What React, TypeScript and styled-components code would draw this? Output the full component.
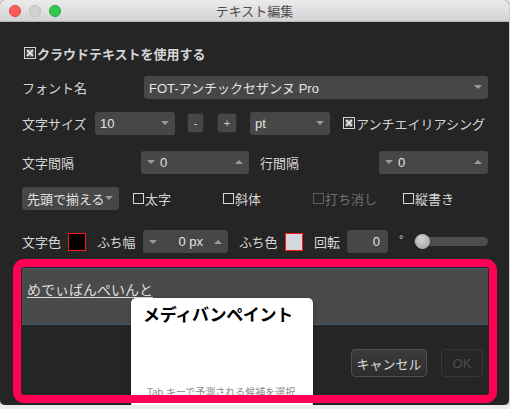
import React from 'react';
import styled, { createGlobalStyle } from 'styled-components';

const GlobalStyle = createGlobalStyle`
  html, body {
    margin: 0;
    padding: 0;
    background: #ececec;
  }
  body {
    font-family: "Liberation Sans", "Noto Sans CJK JP", sans-serif;
  }
`;

const Window = styled.div`
  position: relative;
  width: 509px;
  height: 405px;
  background: #252525;
  border-radius: 5px;
  box-shadow: 0 1px 3px rgba(0, 0, 0, 0.35);
`;

const TitleBar = styled.div`
  position: relative;
  height: 22px;
  box-sizing: border-box;
  display: flex;
  align-items: center;
  justify-content: center;
  background: linear-gradient(#ecebec, #d4d2d4);
  border-bottom: 1px solid #b4b4b4;
  border-radius: 5px 5px 0 0;
`;

const Lights = styled.div`
  position: absolute;
  left: 9px;
  top: 5px;
  display: flex;
  gap: 8px;
`;

const Light = styled.span<{ $c: string; $b: string }>`
  width: 12px;
  height: 12px;
  box-sizing: border-box;
  border-radius: 50%;
  background: ${(p) => p.$c};
  border: 1px solid ${(p) => p.$b};
`;

const Title = styled.div`
  font-size: 13px;
  color: #4b4b4b;
`;

const Body = styled.div`
  padding: 14px 21px 0 22px;
  display: flex;
  flex-direction: column;
  color: #d6d6d6;
  font-size: 13px;
`;

const Row = styled.div<{ $h: number }>`
  height: ${(p) => p.$h}px;
  display: flex;
  align-items: center;
`;

const Label = styled.div<{ $w: number; $ml?: number }>`
  width: ${(p) => p.$w}px;
  margin-left: ${(p) => p.$ml || 0}px;
  flex-shrink: 0;
  white-space: nowrap;
`;

const CloudLabel = styled.div`
  display: flex;
  align-items: center;
  gap: 1px;
  font-weight: bold;
  margin-left: 2px;
`;

const Select = styled.div<{ $w?: number; $ml?: number; $h?: number }>`
  ${(p) => (p.$w ? `width: ${p.$w}px;` : 'flex: 1;')}
  height: ${(p) => p.$h || 23}px;
  margin-left: ${(p) => p.$ml || 0}px;
  box-sizing: border-box;
  padding: 0 6px 0 5px;
  display: flex;
  align-items: center;
  justify-content: space-between;
  background: #474747;
  border-radius: 3px;
  color: #e4e4e4;
  font-size: 13px;
  white-space: nowrap;
`;

const Arrow = styled.span<{ $up?: boolean }>`
  width: 0;
  height: 0;
  border-left: 4px solid transparent;
  border-right: 4px solid transparent;
  ${(p) => (p.$up ? 'border-bottom: 4px solid #9a9a9a;' : 'border-top: 4px solid #9a9a9a;')}
  flex-shrink: 0;
`;

const Spinner = styled.div<{ $w: number }>`
  width: ${(p) => p.$w}px;
  height: 23px;
  box-sizing: border-box;
  padding: 0 6px;
  display: flex;
  align-items: center;
  gap: 5px;
  background: #474747;
  border-radius: 3px;
  color: #e4e4e4;
`;

const SpinValue = styled.span<{ $right?: boolean }>`
  flex: 1;
  text-align: ${(p) => (p.$right ? 'right' : 'left')};
  padding-right: ${(p) => (p.$right ? 6 : 0)}px;
`;

const SmallButton = styled.div<{ $w: number; $ml: number }>`
  width: ${(p) => p.$w}px;
  height: 20px;
  margin-left: ${(p) => p.$ml}px;
  box-sizing: border-box;
  display: flex;
  align-items: center;
  justify-content: center;
  background: #474747;
  border: 1px solid #2f2f2f;
  border-radius: 3px;
  font-size: 11px;
  color: #cfcfcf;
`;

const Check = styled.div<{ $w?: number; $ml?: number; $off?: boolean }>`
  ${(p) => (p.$w ? `width: ${p.$w}px;` : '')}
  margin-left: ${(p) => p.$ml || 0}px;
  display: flex;
  align-items: center;
  gap: 1px;
  color: ${(p) => (p.$off ? '#6e6e6e' : '#d6d6d6')};
  white-space: nowrap;
`;

const Box = styled.span<{ $off?: boolean }>`
  width: 11px;
  height: 11px;
  box-sizing: border-box;
  border: 1px solid ${(p) => (p.$off ? '#5e5e5e' : '#d6d6d6')};
  flex-shrink: 0;
  display: flex;
`;

const Swatch = styled.div<{ $c: string }>`
  width: 18px;
  height: 18px;
  box-sizing: border-box;
  border: 1px solid #ff1a1a;
  background: ${(p) => p.$c};
  flex-shrink: 0;
`;

const NumInput = styled.div`
  width: 41px;
  height: 23px;
  box-sizing: border-box;
  padding-right: 8px;
  display: flex;
  align-items: center;
  justify-content: flex-end;
  background: #474747;
  border-radius: 3px;
  color: #e4e4e4;
`;

const Degree = styled.div`
  width: 15px;
  margin-left: 11px;
  font-size: 11px;
  margin-top: -6px;
`;

const Slider = styled.div`
  position: relative;
  width: 74px;
  height: 9px;
  background: #4d4d4d;
  border-radius: 5px;
`;

const Knob = styled.span`
  position: absolute;
  left: 1px;
  top: -3px;
  width: 15px;
  height: 15px;
  border-radius: 50%;
  background: radial-gradient(circle at 40% 35%, #d2d2d2, #9c9c9c);
`;

const TextArea = styled.div`
  height: 57px;
  margin-top: -1px;
  box-sizing: border-box;
  padding: 10px 5px;
  background: #4a4a4a;
  border-top: 1px solid #3c5b73;
  border-bottom: 1px solid #3c5b73;
  font-size: 14px;
  color: #dedede;
`;

const Composing = styled.span`
  text-decoration: underline;
  text-underline-offset: 2px;
`;

const Buttons = styled.div`
  margin-top: 24px;
  margin-right: 5px;
  display: flex;
  justify-content: flex-end;
  gap: 14px;
`;

const Button = styled.div<{ $w: number; $off?: boolean }>`
  width: ${(p) => p.$w}px;
  height: 28px;
  box-sizing: border-box;
  display: flex;
  align-items: center;
  justify-content: center;
  border-radius: 4px;
  font-size: 13px;
  border: 1px solid ${(p) => (p.$off ? '#383838' : '#505050')};
  background: ${(p) => (p.$off ? '#262626' : 'linear-gradient(#3b3b3b, #2d2d2d)')};
  color: ${(p) => (p.$off ? '#4f4f4f' : '#dadada')};
`;

const Highlight = styled.div`
  position: absolute;
  left: 13px;
  top: 259px;
  width: 484px;
  height: 144px;
  box-sizing: border-box;
  border: 8px solid #ff0052;
  border-radius: 11px;
  z-index: 3;
  pointer-events: none;
`;

const Popup = styled.div`
  position: absolute;
  left: 131px;
  top: 298px;
  width: 182px;
  height: 110px;
  box-sizing: border-box;
  padding: 3px 12px 0 12px;
  background: #ffffff;
  border-radius: 5px;
  box-shadow: 0 1px 4px rgba(0, 0, 0, 0.3);
  z-index: 2;
  display: flex;
  flex-direction: column;
  justify-content: space-between;
`;

const PopupTitle = styled.div`
  font-size: 17px;
  font-weight: bold;
  color: #000;
  letter-spacing: -0.3px;
`;

const PopupHint = styled.div`
  font-size: 10px;
  color: #8a8a8a;
  padding: 0 0 9px 4px;
  white-space: nowrap;
`;

const CheckMark = ({ off }: { off?: boolean }) => <Box $off={off} />;

const CheckedMark = () => (
  <svg width="12" height="12" viewBox="0 0 12 12">
    <rect x="0.5" y="0.5" width="11" height="11" fill="none" stroke="#d6d6d6" />
    <rect x="2.5" y="2.5" width="7" height="7" fill="#8a8a8a" />
    <path d="M3 3 L9 9 M9 3 L3 9" stroke="#f0f0f0" strokeWidth="1.4" />
  </svg>
);

const App: React.FC = () => (
  <>
    <GlobalStyle />
    <Window>
      <TitleBar>
        <Lights>
          <Light $c="#fc5b57" $b="#e0443e" />
          <Light $c="#d3d2d3" $b="#c2c1c2" />
          <Light $c="#34c84a" $b="#25a93a" />
        </Lights>
        <Title>テキスト編集</Title>
      </TitleBar>
      <Body>
        <Row $h={34}>
          <CloudLabel>
            <CheckedMark />
            クラウドテキストを使用する
          </CloudLabel>
        </Row>
        <Row $h={34}>
          <Label $w={122}>フォント名</Label>
          <Select>
            FOT-アンチックセザンヌ Pro
            <Arrow />
          </Select>
        </Row>
        <Row $h={38}>
          <Label $w={73}>文字サイズ</Label>
          <Select $w={80}>
            10
            <Arrow />
          </Select>
          <SmallButton $w={17} $ml={12}>-</SmallButton>
          <SmallButton $w={20} $ml={13}>+</SmallButton>
          <Select $w={80} $ml={13}>
            pt
            <Arrow />
          </Select>
          <Check $ml={13}>
            <CheckedMark />
            アンチエイリアシング
          </Check>
        </Row>
        <Row $h={40}>
          <Label $w={119}>文字間隔</Label>
          <Spinner $w={108}>
            <Arrow />
            <SpinValue>0</SpinValue>
            <Arrow $up />
          </Spinner>
          <Label $w={119} $ml={11}>行間隔</Label>
          <Spinner $w={109}>
            <Arrow />
            <SpinValue>0</SpinValue>
            <Arrow $up />
          </Spinner>
        </Row>
        <Row $h={32}>
          <Select $w={97} $h={23}>
            先頭で揃える
            <Arrow />
          </Select>
          <Check $w={90} $ml={14}>
            <CheckMark />
            太字
          </Check>
          <Check $w={90}>
            <CheckMark />
            斜体
          </Check>
          <Check $w={90} $off>
            <CheckMark off />
            打ち消し
          </Check>
          <Check>
            <CheckMark />
            縦書き
          </Check>
        </Row>
        <Row $h={55}>
          <Label $w={46}>文字色</Label>
          <Swatch $c="#000000" />
          <Label $w={46} $ml={11}>ふち幅</Label>
          <Spinner $w={85}>
            <Arrow />
            <SpinValue $right>0 px</SpinValue>
            <Arrow $up />
          </Spinner>
          <Label $w={46} $ml={11}>ふち色</Label>
          <Swatch $c="#d6d7de" />
          <Label $w={33} $ml={11}>回転</Label>
          <NumInput>0</NumInput>
          <Degree>°</Degree>
          <Slider>
            <Knob />
          </Slider>
        </Row>
        <TextArea>
          <Composing>めでぃばんぺいんと</Composing>
        </TextArea>
        <Buttons>
          <Button $w={76}>キャンセル</Button>
          <Button $w={42} $off>OK</Button>
        </Buttons>
      </Body>
      <Popup>
        <PopupTitle>メディバンペイント</PopupTitle>
        <PopupHint>Tab キーで予測される候補を選択</PopupHint>
      </Popup>
      <Highlight />
    </Window>
  </>
);

export default App;
